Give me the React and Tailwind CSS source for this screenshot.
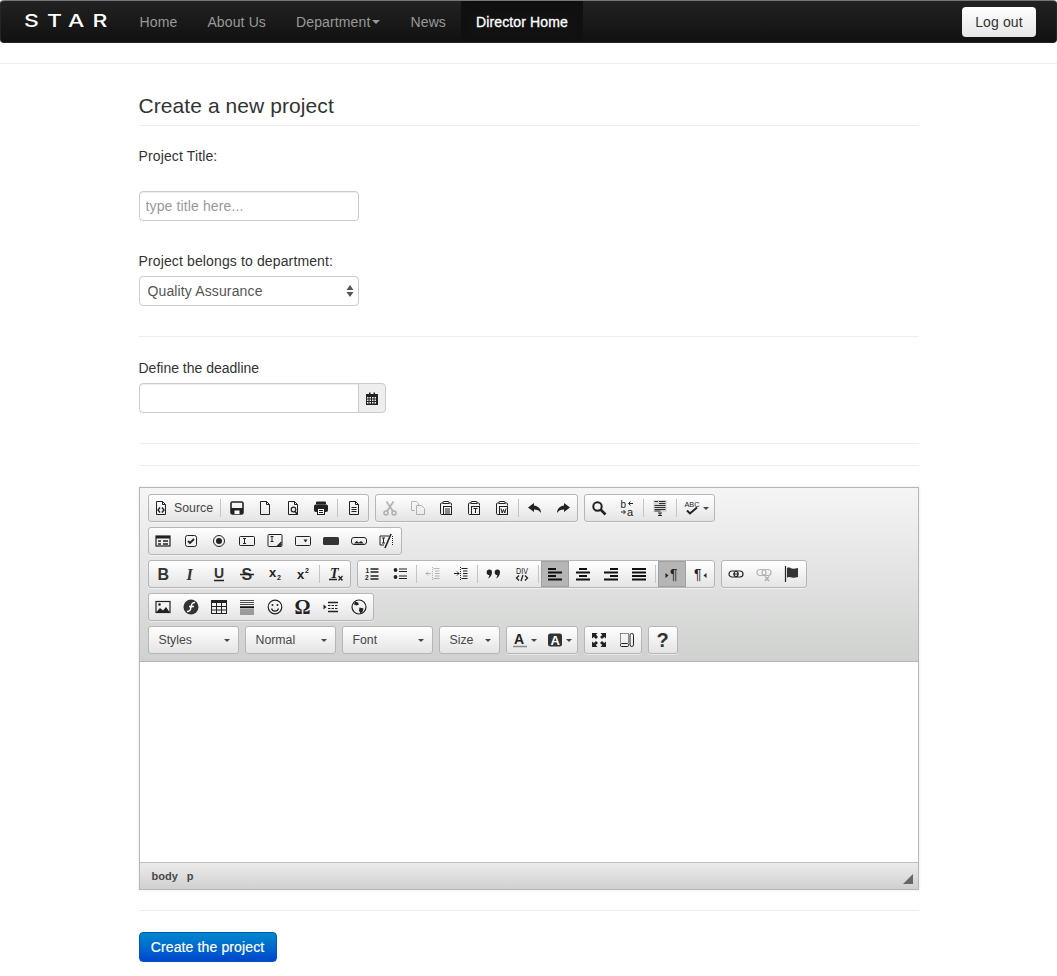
import React from 'react';

const FONT = "font-['Liberation_Sans',Arial,sans-serif]";

// toolbar icon frame, everything in a 16 unit box
function Ic({ children, dim }) {
  return (
    <svg width="16" height="16" viewBox="0 0 16 16" fill="none" stroke="#222" strokeWidth="1" className={dim ? 'opacity-30' : ''}>
      {children}
    </svg>
  );
}

const T = ({ x, y, s = 12, b, i, serif, len, children, fill = '#222' }) => (
  <text x={x} y={y} fontSize={s} fontWeight={b ? 700 : 400} fontStyle={i ? 'italic' : 'normal'} fill={fill} stroke="none" textLength={len}
    lengthAdjust="spacingAndGlyphs" fontFamily={serif ? 'Liberation Serif, serif' : 'Liberation Sans, sans-serif'}>{children}</text>
);

const Doc = () => <path d="M3.5 1.5h6l3 3v10h-9zM9.5 1.5v3h3" />;
const Lines = ({ d }) => <path d={d} strokeWidth="2" stroke="#111" />;
const Clip = () => (
  <>
    <path d="M5 3H3.5q-1 0-1 1v9.5q0 1 1 1H5M11 3h1.5q1 0 1 1v1.5" />
    <path d="M5 3.5V2q0-.5.5-.5h5q.5 0 .5.5v1.500z" />
    <rect x="5.5" y="6.5" width="8" height="8" />
  </>
);

const icons = {
  source: <Ic><Doc /><path d="M7 7.5 5 10l2 2.5M9 7.5l2 2.5-2 2.5" strokeWidth="1.4" /></Ic>,
  save: <Ic><rect x="2" y="2" width="12" height="12" rx="1.5" strokeWidth="1.6" /><path d="M2 8h12v6H2z" fill="#222" stroke="none" /><path d="M5.5 10.5h5V14h-5z" fill="#fff" stroke="none" /></Ic>,
  newpage: <Ic><Doc /></Ic>,
  preview: <Ic><Doc /><circle cx="8.5" cy="9.5" r="2.3" strokeWidth="1.2" /><path d="m10 11.5 2.5 3" strokeWidth="1.5" /></Ic>,
  print: <Ic><rect x="1.5" y="5" width="13" height="6.5" rx="1" fill="#222" /><path d="M3.5 2h9v2h-9z" fill="#222" /><rect x="4.5" y="8.5" width="7" height="6" fill="#fff" /><path d="M6 10.5h4M6 12.5h4" /></Ic>,
  templates: <Ic><Doc /><path d="M5.5 7.5h5M5.5 9.5h5M5.5 11.5h5" /></Ic>,
  cut: <Ic dim><circle cx="4" cy="13" r="2" strokeWidth="1.5" /><circle cx="12" cy="13" r="2" strokeWidth="1.5" /><path d="M5 11.3 11.5 1.5M11 11.3 4.5 1.5" strokeWidth="1.8" /></Ic>,
  copy: <Ic dim><path d="M1.5 1.5h5l2 2v2M1.5 1.5v9h3" /><path d="M6.5 5.5h5l3 3v6h-8z" /></Ic>,
  paste: <Ic><Clip /><path d="M7 9h5M7 11h5M7 13h5" /></Ic>,
  pastetext: <Ic><Clip /><path d="M7.5 8.5h4M9.5 8.5V13" /></Ic>,
  pasteword: <Ic><Clip /><path d="m7 8.5 1.2 4.5 1.3-3.5 1.3 3.5L12 8.5" /></Ic>,
  undo: <Ic><path d="M7 3 1 7.5 7 12V9.5c3 0 5.5 1 7 3.5 0-4.5-3-7-7-7.5z" fill="#222" stroke="none" /></Ic>,
  redo: <Ic><path d="m9 3 6 4.5L9 12V9.5c-3 0-5.5 1-7 3.5 0-4.5 3-7 7-7.5z" fill="#222" stroke="none" /></Ic>,
  find: <Ic><circle cx="6.5" cy="6.5" r="4.2" strokeWidth="2" /><path d="m9.5 9.5 5 5" strokeWidth="2.6" /></Ic>,
  replace: <Ic><T x="1.5" y="8" s={10}>b</T><T x="8" y="15.5" s={11}>a</T><path d="M14 3.5h-4M11.5 1.5l-2 2 2 2M2 12h4M4.5 10l2 2-2 2" /></Ic>,
  selectall: <Ic><path d="M1.5 0h13v12h-13z" fill="#d4d4d4" stroke="none" /><path d="M2.5 1.5h3.5M7 1.5h6.5M7 3.5h6.5M2.5 5.5h11M2.5 7.5h11M2.5 9.5h11M2.5 11h6" stroke="#333" strokeWidth="1" /><path d="M6 13h4M6 15.500h4M8 13v2.500" /></Ic>,
  scayt: <Ic><T x="0.5" y="7" s={8} len={15}>ABC</T><path d="m3 10.5 3 3 7-6" strokeWidth="2" /></Ic>,
  form: <Ic><rect x="1" y="3" width="14" height="10" strokeWidth="1.2" /><path d="M1 3h14v2.5H1z" fill="#222" stroke="none" /><path d="M3 8h3M3 11h3M8 8h5M8 11h5" strokeWidth="1.3" /></Ic>,
  checkbox: <Ic><rect x="2.5" y="2.5" width="11" height="11" rx="2" /><path d="m5 8 2 2 4-4" strokeWidth="1.8" /></Ic>,
  radio: <Ic><circle cx="8" cy="8" r="5.5" /><circle cx="8" cy="8" r="3" fill="#222" stroke="none" /></Ic>,
  textfield: <Ic><rect x="0.5" y="3.5" width="15" height="9" rx="1" /><path d="M4 5.5h3M4 10.5h3M5.5 5.5v5" /></Ic>,
  textarea: <Ic><rect x="1" y="1.5" width="14" height="12" rx="1" /><path d="M3.5 3.5h3M3.5 8.5h3M5 3.5v5" /><path d="M14.5 9 10 13.5M14.5 11 12 13.5" strokeWidth="1.3" /></Ic>,
  select: <Ic><rect x="0.5" y="3.5" width="15" height="9" rx="1" /><path d="M8.5 6.5h4l-2 3z" fill="#222" stroke="none" /></Ic>,
  button: <Ic><rect x="0" y="4" width="16" height="8" rx="1.5" fill="#333" stroke="none" /></Ic>,
  imagebutton: <Ic><rect x="0.5" y="4.5" width="15" height="7" rx="2.5" /><path d="m3 10.5 2.5-2.5 2.5 1.5 2-1.5 3 2.5z" fill="#222" stroke="none" /></Ic>,
  hiddenfield: <Ic><path d="M10 3H1v9h4" /><path d="M13.5 3v10" strokeDasharray="1 1" /><path d="M3 5h3M3 10h3M4.5 5v5" /><path d="M6 15 12 1" strokeWidth="1.6" /></Ic>,
  bold: <Ic><T x="2.5" y="13.5" s={16} b fill="#333">B</T></Ic>,
  italic: <Ic><T x="3.5" y="13.5" s={16} b i serif fill="#333">I</T></Ic>,
  underline: <Ic><T x="3" y="12" s={14} b fill="#333">U</T><path d="M3 14.5h10" strokeWidth="1.5" /></Ic>,
  strike: <Ic><T x="2.5" y="13.5" s={16} b fill="#333">S</T><path d="M1 8.5h14" strokeWidth="1.3" /></Ic>,
  sub: <Ic><T x="2" y="11" s={13} b>x</T><T x="10" y="14" s={7} b>2</T></Ic>,
  sup: <Ic><T x="2" y="13" s={13} b>x</T><T x="10" y="7" s={7} b>2</T></Ic>,
  removeformat: <Ic><T x="2" y="11.5" s={14} b i serif>T</T><path d="M1 13.5h8" strokeWidth="1.3" /><path d="m10.5 10 4 4.5m0-4.5-4 4.5" strokeWidth="1.3" /></Ic>,
  numbered: <Ic><T x="1.5" y="7" s={6.5} b>1</T><T x="1" y="14" s={6.5} b>2</T><path d="M6.5 3h8M6.5 6h8M6.5 10h8M6.5 13h8" strokeWidth="1.3" /></Ic>,
  bulleted: <Ic><circle cx="3.5" cy="4" r="1.9" fill="#222" stroke="none" /><circle cx="3.5" cy="11" r="1.9" fill="#222" stroke="none" /><path d="M7 3h8M7 5.5h8M7 10h8M7 12.5h8" strokeWidth="1.2" /></Ic>,
  outdent: <Ic dim><path d="M8.5 2.5h6M10 5h4.5M10 7.5h4.5M10 10h4.5M8.5 12.5h6" /><path d="M7.5 1v13" strokeDasharray="1 1" /><path d="M6 7.5H1M3 5.5l-2 2 2 2" /></Ic>,
  indent: <Ic><path d="M8.5 2.5h6M10 5h4.5M10 7.5h4.5M10 10h4.5M8.5 12.5h6" /><path d="M7.5 1v13" strokeDasharray="1 1" /><path d="M1 7.5h5M4 5.5l2 2-2 2" /></Ic>,
  quote: <Ic><path d="M3.500 3.500a2.500 2.500 0 0 1 2.500 2.500c0 3-1.500 5.500-4 6.500 1-1.500 1.300-2.500 1.300-3.500a2.500 2.500 0 0 1 .2-5.500zM11.500 3.500A2.500 2.500 0 0 1 14 6c0 3-1.500 5.500-4 6.500 1-1.500 1.300-2.500 1.300-3.500a2.500 2.500 0 0 1 .2-5.500z" fill="#222" stroke="none" /></Ic>,
  div: <Ic><T x="2" y="7.5" s={8.5} len={12}>DIV</T><path d="M5 9.5 2.5 12 5 14.5M11 9.5l2.5 2.5-2.5 2.5M9 9l-2 6" strokeWidth="1.3" /></Ic>,
  left: <Ic><Lines d="M1 3h8M1 6.5h14M1 10h8M1 13.5h14" /></Ic>,
  center: <Ic><Lines d="M4 3h8M1 6.5h14M4 10h8M1 13.5h14" /></Ic>,
  right: <Ic><Lines d="M7 3h8M1 6.5h14M7 10h8M1 13.5h14" /></Ic>,
  justify: <Ic><Lines d="M1 3h14M1 6.5h14M1 10h14M1 13.5h14" /></Ic>,
  ltr: <Ic><path d="M1.5 7v5l3-2.5z" fill="#222" stroke="none" /><T x="6" y="13" s={14}>¶</T></Ic>,
  rtl: <Ic><T x="2" y="13" s={14}>¶</T><path d="M14.5 7v5l-3-2.5z" fill="#222" stroke="none" /></Ic>,
  link: <Ic><rect x="1" y="5" width="9" height="6" rx="3" strokeWidth="1.2" /><rect x="6" y="5" width="9" height="6" rx="3" strokeWidth="1.2" /><path d="M5 8h6" strokeWidth="1.2" /></Ic>,
  unlink: <Ic dim><rect x="1" y="3.5" width="9" height="6" rx="3" strokeWidth="1.2" /><rect x="6" y="3.5" width="9" height="6" rx="3" strokeWidth="1.2" /><path d="m9 10.5 4 4.5m0-4.5-4 4.5" strokeWidth="1.4" /></Ic>,
  anchor: <Ic><path d="M1.5 0v16" strokeWidth="1.2" /><path d="M3 2c2-1 3 0 5 .5s3 0 6-.5v9c-3 .5-4 1-6 .5s-3-1-5 0z" fill="#333" stroke="none" /></Ic>,
  image: <Ic><rect x="1" y="2.5" width="14" height="11" strokeWidth="1.2" /><path d="m1.5 13 3.5-4 3 2.5 3-3.5 3.5 5z" fill="#222" stroke="none" /><circle cx="4.5" cy="5.5" r="1.3" fill="#222" stroke="none" /></Ic>,
  flash: <Ic><circle cx="8" cy="8" r="7.5" fill="#333" stroke="none" /><path d="M12 3.5C9 3.5 8.5 5 8 8s-1 4.5-4 4.5M6 7.500h5" stroke="#fff" strokeWidth="1.6" /></Ic>,
  table: <Ic><rect x="0.5" y="1.5" width="15" height="13" /><path d="M0.5 1h15v3h-15z" fill="#222" stroke="none" /><path d="M5.5 4v10M10.5 4v10M1 7.5h14M1 11h14" /></Ic>,
  hr: <Ic><path d="M1 1.5h14M1 3.5h14M1 5.5h14M1 11h14M1 13h14M1 15h14" strokeWidth="0.8" /><path d="M1 8.2h14" strokeWidth="2" stroke="#111" /></Ic>,
  smiley: <Ic><circle cx="8" cy="8" r="6.8" strokeWidth="1.2" /><circle cx="5.5" cy="6" r="1" fill="#222" stroke="none" /><circle cx="10.5" cy="6" r="1" fill="#222" stroke="none" /><path d="M4.5 9.5c1 3.5 6 3.5 7 0" strokeWidth="1.2" /></Ic>,
  pagebreak: <Ic><path d="M.5 5.5v5l3-2.5z" fill="#222" stroke="none" /><path d="M5 3.5h10M5 12.5h10" strokeWidth="1.5" /><path d="M5 6.5h10M5 9.5h10" strokeDasharray="2.5 1" /></Ic>,
  iframe: <Ic><circle cx="8" cy="8" r="7" strokeWidth="1.2" /><path d="m4 2.5 3 1 1 2-2.5 1-2.5-1zM8.5 8.5l4 1-1 3.5-2 1.5-1.5-3z" fill="#222" stroke="none" /></Ic>,
  textcolor: <Ic><T x="2" y="12" s={14} b>A</T><path d="M1 14.5h14" stroke="#888" strokeWidth="1.6" /></Ic>,
  bgcolor: <Ic><rect x="1" y="1.5" width="14" height="13" rx="2.5" fill="#333" stroke="none" /><T x="3.5" y="12.5" s={13} b fill="#fff">A</T></Ic>,
  maximize: <Ic><path d="M1 1h5.5L5 2.8 7 5 5 7 2.8 5 1 6.5zM15 1v5.5L13.2 5 11 7 9 5l2.2-2L9.5 1zM1 15V9.5L2.8 11 5 9l2 2-2.2 2 1.7 2zM15 15H9.5l1.7-2L9 11l2-2 2.2 2L15 9.5z" fill="#222" stroke="none" /></Ic>,
  showblocks: <Ic><path d="M1.5 1.5h8v9" strokeDasharray="1 1" /><path d="M1.5 1.5v10" strokeDasharray="1 1" /><rect x="1.5" y="11.5" width="8" height="3" rx="1" /><rect x="11" y="1.5" width="3.5" height="13" rx="1.7" /></Ic>,
};

function Btn({ name, on, w = 'w-[28px]', arrow, children }) {
  return (
    <div className={`h-[26px] ${w} flex items-center justify-center gap-[3px] shrink-0 ${on ? 'bg-[#b5b5b5] shadow-[inset_0_0_0_1px_#a0a0a0]' : ''}`}>
      {icons[name]}
      {children}
      {arrow && <Caret />}
    </div>
  );
}

const Caret = () => <span className="w-0 h-0 border-x-[3px] border-x-transparent border-t-[3px] border-t-[#474747]" />;
const Sep = () => <div className="w-px h-[18px] self-center bg-[#c4c4c4] mx-[2px] shrink-0" />;
const Group = ({ children }) => (
  <div className="flex h-[28px] rounded-[3px] border border-[#b6b6b6] bg-linear-to-b from-white to-[#e4e4e4] shadow-[0_1px_0_rgba(255,255,255,0.5)] overflow-hidden">{children}</div>
);
const Row = ({ children }) => <div className="flex gap-[6px] mb-[5px]">{children}</div>;

function Combo({ label, w }) {
  return (
    <div className={`${w} h-[28px] flex items-center justify-between pl-[10px] pr-[8px] rounded-[3px] border border-[#b6b6b6] bg-linear-to-b from-white to-[#e4e4e4] text-[12.3px] text-[#474747]`}>
      {label}
      <Caret />
    </div>
  );
}

const Rule = ({ className = '' }) => <div className={`h-px bg-[#eeeeee] ${className}`} />;

function Editor() {
  return (
    <div className="mt-[21px] border border-[#b6b6b6] tracking-normal shadow-[0_0_3px_rgba(0,0,0,0.1)]">
      <div className="bg-linear-to-b from-[#f5f5f5] to-[#cfd1cf] pt-[6px] pl-[8px] pb-[2px] border-b border-[#b6b6b6] h-[174px]">
        <Row>
          <Group>
            <Btn name="source" w="w-[69px]"><span className="text-[12.3px] text-[#474747] ml-[2px]">Source</span></Btn>
            <Sep />
            <Btn name="save" /><Btn name="newpage" /><Btn name="preview" /><Btn name="print" />
            <Sep />
            <Btn name="templates" />
          </Group>
          <Group>
            <Btn name="cut" /><Btn name="copy" /><Btn name="paste" /><Btn name="pastetext" /><Btn name="pasteword" />
            <Sep />
            <Btn name="undo" /><Btn name="redo" />
          </Group>
          <Group>
            <Btn name="find" /><Btn name="replace" />
            <Sep />
            <Btn name="selectall" />
            <Sep />
            <Btn name="scayt" w="w-[35px]" arrow />
          </Group>
        </Row>
        <Row>
          <Group>
            <Btn name="form" /><Btn name="checkbox" /><Btn name="radio" /><Btn name="textfield" /><Btn name="textarea" />
            <Btn name="select" /><Btn name="button" /><Btn name="imagebutton" /><Btn name="hiddenfield" />
          </Group>
        </Row>
        <Row>
          <Group>
            <Btn name="bold" /><Btn name="italic" /><Btn name="underline" /><Btn name="strike" /><Btn name="sub" /><Btn name="sup" />
            <Sep />
            <Btn name="removeformat" />
          </Group>
          <Group>
            <Btn name="numbered" /><Btn name="bulleted" />
            <Sep />
            <Btn name="outdent" /><Btn name="indent" />
            <Sep />
            <Btn name="quote" /><Btn name="div" />
            <Sep />
            <Btn name="left" on /><Btn name="center" /><Btn name="right" /><Btn name="justify" />
            <Sep />
            <Btn name="ltr" on /><Btn name="rtl" />
          </Group>
          <Group>
            <Btn name="link" /><Btn name="unlink" /><Btn name="anchor" />
          </Group>
        </Row>
        <Row>
          <Group>
            <Btn name="image" /><Btn name="flash" /><Btn name="table" /><Btn name="hr" /><Btn name="smiley" />
            <Btn><span className="font-['Liberation_Serif',serif] font-bold text-[20px] leading-none text-[#222]">Ω</span></Btn>
            <Btn name="pagebreak" /><Btn name="iframe" />
          </Group>
        </Row>
        <Row>
          <Combo label="Styles" w="w-[91px]" />
          <Combo label="Normal" w="w-[91px]" />
          <Combo label="Font" w="w-[91px]" />
          <Combo label="Size" w="w-[61px]" />
          <Group>
            <Btn name="textcolor" w="w-[35px]" arrow /><Btn name="bgcolor" w="w-[35px]" arrow />
          </Group>
          <Group>
            <Btn name="maximize" /><Btn name="showblocks" />
          </Group>
          <Group>
            <Btn><span className="font-bold text-[20px] leading-none text-[#333]">?</span></Btn>
          </Group>
        </Row>
      </div>
      <div className="h-[200px] bg-white" />
      <div className="h-[27px] border-t border-[#bfbfbf] bg-linear-to-b from-[#ebebeb] to-[#cfd1cf] flex items-center justify-between pl-[12px] pr-[4px]">
        <div className="flex gap-[9px] text-[11px] font-bold text-[#484848]">
          <span>body</span>
          <span>p</span>
        </div>
        <svg width="12" height="12" viewBox="0 0 12 12" className="mt-[6px]"><path d="M11 1v10H1z" fill="#666" /></svg>
      </div>
    </div>
  );
}

export default function App() {
  return (
    <div className={`${FONT} min-h-[976px] bg-white text-[14px] tracking-[0.13px] text-[#333]`}>
      {/* navbar */}
      <nav className="h-[43px] flex items-stretch justify-between rounded-[4px] border border-[#252525] border-t-[#777] bg-linear-to-b from-[#222222] to-[#111111]">
        <div className="flex items-stretch">
          <div className="self-center ml-[23px] w-[100.5px] leading-none">
            <span className="inline-block origin-left scale-x-[1.35] font-['Inter',sans-serif] text-[17px] font-medium tracking-[6px] text-white whitespace-nowrap">STAR</span>
          </div>
          {['Home', 'About Us'].map((l) => (
            <a key={l} className="px-[15px] pt-px flex items-center text-[#999]">{l}</a>
          ))}
          <a className="px-[15px] pt-px flex items-center text-[#999]">
            Department
            <span className="ml-[2px] w-0 h-0 border-x-[4px] border-x-transparent border-t-[4px] border-t-[#999]" />
          </a>
          <a className="px-[15px] pt-px flex items-center text-[#999]">News</a>
          <a className="px-[15px] pt-px flex items-center text-white bg-[#111] shadow-[inset_0_3px_8px_rgba(0,0,0,0.125)] [-webkit-text-stroke:0.3px_white]">Director Home</a>
        </div>
        <button className="self-center mr-[20px] pt-px h-[30px] w-[74px] rounded-[4px] bg-linear-to-b from-white to-[#e6e6e6] text-[#333]">Log out</button>
      </nav>

      <Rule className="mt-[20px]" />

      <main className="w-[780px] mx-auto">
        <h1 className="mt-[29px] text-[21px] tracking-[0.08px] leading-[26px] pb-[6px] border-b border-[#eeeeee] text-[#333]">Create a new project</h1>

        <label className="block mt-[20px] leading-[20px]">Project Title:</label>
        <input
          placeholder="type title here..."
          className="block mt-[25px] w-[220px] h-[30px] px-[6px] rounded-[4px] border border-[#cccccc] shadow-[inset_0_1px_1px_rgba(0,0,0,0.075)] placeholder:text-[#999] outline-none"
        />

        <label className="block mt-[30px] leading-[20px]">Project belongs to department:</label>
        <div className="relative mt-[5px] w-[220px]">
          <select className="appearance-none block w-full h-[30px] pl-[8px] rounded-[4px] border border-[#cccccc] bg-white text-[#555] outline-none">
            <option>Quality Assurance</option>
          </select>
          <svg width="8" height="14" viewBox="0 0 8 14" className="absolute right-[5px] top-[8px]">
            <path d="M4 1 7.5 6H.5zM4 13 .5 8h7z" fill="#555" />
          </svg>
        </div>

        <Rule className="mt-[30px]" />

        <label className="block mt-[21px] leading-[20px] tracking-normal">Define the deadline</label>
        <div className="flex mt-[5px]">
          <input className="block w-[220px] h-[30px] rounded-l-[4px] border border-[#cccccc] shadow-[inset_0_1px_1px_rgba(0,0,0,0.075)] outline-none" />
          <div className="w-[28px] h-[30px] -ml-px flex items-center justify-center rounded-r-[4px] border border-[#cccccc] bg-[#eeeeee]">
            <svg width="12" height="13" viewBox="0 0 12 13">
              <path d="M0 2h12v11H0z" fill="#222" />
              <path d="M3 .5h1.500v2H3zM7.500 .5H9v2H7.500z" fill="#222" />
              <path d="M1 5h1.500v1.500H1zM3.500 5H5v1.500H3.500zM6 5h1.500v1.500H6zM8.500 5H10v1.500H8.500zM1 7.500h1.500V9H1zM3.500 7.500H5V9H3.500zM6 7.500h1.500V9H6zM8.500 7.500H10V9H8.500zM1 10h1.500v1.500H1zM3.500 10H5v1.500H3.500zM6 10h1.500v1.500H6zM8.500 10H10v1.500H8.500z" fill="#eee" />
            </svg>
          </div>
        </div>

        <Rule className="mt-[30px]" />
        <Rule className="mt-[21px]" />

        <Editor />

        <Rule className="mt-[20px]" />

        <button className="block mt-[21px] w-[138px] h-[30px] rounded-[4px] bg-linear-to-b from-[#0088cc] to-[#0044cc] text-white border border-[#0055bb] [-webkit-text-stroke:0.2px_white]">Create the project</button>
      </main>
    </div>
  );
}
